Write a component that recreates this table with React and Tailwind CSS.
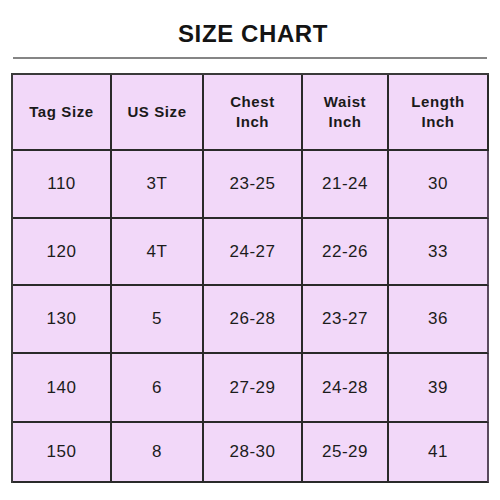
import React from "react";

// Données du tableau des tailles
const headers = [["Tag Size"], ["US Size"], ["Chest", "Inch"], ["Waist", "Inch"], ["Length", "Inch"]];

const rows = [
  ["110", "3T", "23-25", "21-24", "30"],
  ["120", "4T", "24-27", "22-26", "33"],
  ["130", "5", "26-28", "23-27", "36"],
  ["140", "6", "27-29", "24-28", "39"],
  ["150", "8", "28-30", "25-29", "41"],
];

const rowHeights = ["h-[68px]", "h-[67px]", "h-[68px]", "h-[69px]", "h-[60px]"];

const App = () => {
  return (
    <div
      className="w-[500px] h-[500px] bg-white flex flex-col items-center"
      style={{ fontFamily: '"Liberation Sans", Arial, sans-serif' }}
    >
      {/* Titre */}
      <div className="mt-[20px] h-[28px] leading-[28px] text-[24px] font-bold text-[#141414] tracking-[0.6px] pl-[6px]">
        SIZE CHART
      </div>
      <div className="mt-[9px] w-[474px] h-[2px] bg-[#858585]" />

      {/* Tableau */}
      <div className="mt-[14px] w-[478px] border-l-2 border-t-2 border-[#3a3a3a] bg-[#f2d8f9]">
        <div className="grid grid-cols-[99px_92px_99px_86px_100px] h-[76px]">
          {headers.map((lines, i) => (
            <div
              key={i}
              className="flex flex-col items-center justify-center border-r-2 border-b-2 border-[#2a2a2a] text-[15px] leading-[20px] font-bold text-[#1a1a1a] tracking-[0.6px]"
            >
              {lines.map((l) => (
                <span key={l}>{l}</span>
              ))}
            </div>
          ))}
        </div>
        {rows.map((row, r) => (
          <div key={r} className={`grid grid-cols-[99px_92px_99px_86px_100px] ${rowHeights[r]}`}>
            {row.map((cell, c) => (
              <div
                key={c}
                className={`flex items-center justify-center border-r-2 border-b-2 ${c === 4 ? "border-r-[#5a4a5e]" : "border-r-[#2a2a2a]"} border-b-[#2a2a2a] text-[17px] text-[#1c1c1c] tracking-[0.5px]`}
              >
                {cell}
              </div>
            ))}
          </div>
        ))}
      </div>
    </div>
  );
};

export default App;
